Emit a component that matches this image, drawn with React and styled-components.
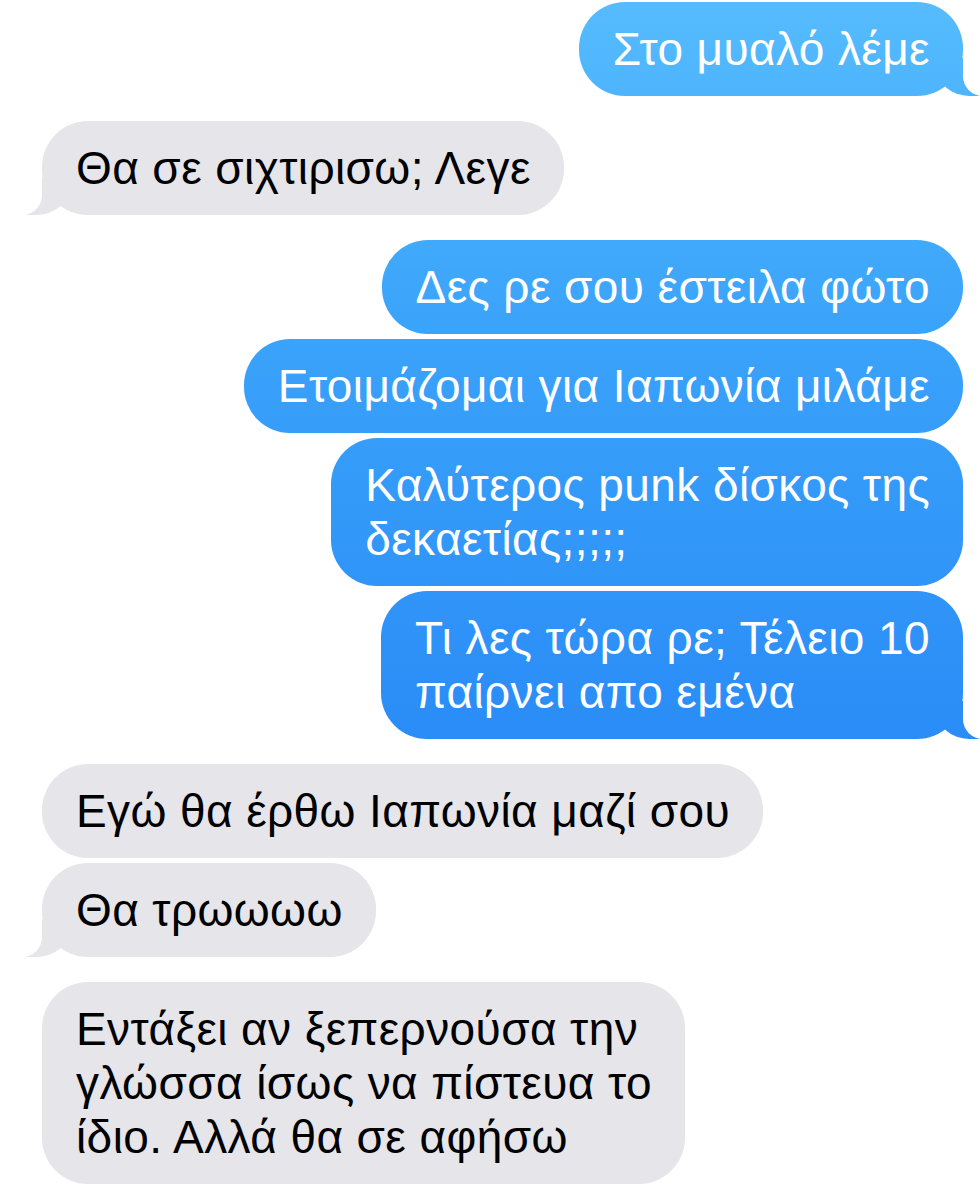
import React from 'react';
import styled, { createGlobalStyle, css } from 'styled-components';

const GlobalStyle = createGlobalStyle`
    html, body {
        margin: 0;
        padding: 0;
        background: #ffffff;
    }
    body {
        font-family: "Liberation Sans", Arial, sans-serif;
        -webkit-font-smoothing: antialiased;
    }
`

const sentGradient = css`
    background-image: linear-gradient(180deg, #56bcfe 0px, #3aa3fa 330px, #2a8cf7 740px, #1f80f5 1185px);
    background-attachment: fixed;
`

const Thread = styled.div `
    box-sizing: border-box;
    display: flex;
    flex-direction: column;
    padding: 2px 17px 0 42px;
    width: 980px;
    height: 1185px;
    overflow: hidden;
`

const Bubble = styled.div `
    position: relative;
    box-sizing: border-box;
    align-self: ${({$me}) => $me ? 'flex-end' : 'flex-start'};
    margin-top: ${({$first}) => $first ? '25px' : '5px'};
    padding: 20px 33px 20px 34px;
    border-radius: 46px;
    font-size: 46px;
    letter-spacing: 0.4px;
    line-height: 54px;
    white-space: nowrap;
    color: ${({$me}) => $me ? '#ffffff' : '#000000'};
    background-color: #e5e5ea;
    ${({$me}) => $me && sentGradient}

    &:first-child {
        margin-top: 0;
    }

    ${({$tail, $me}) => $tail && ($me ? css`
        &::before {
            content: "";
            position: absolute;
            right: -16px;
            bottom: 0;
            width: 42px;
            height: 38px;
            ${sentGradient}
            border-bottom-left-radius: 32px 28px;
        }
        &::after {
            content: "";
            position: absolute;
            right: -47px;
            bottom: 0;
            width: 47px;
            height: 40px;
            background: #ffffff;
            border-bottom-left-radius: 20px;
        }
    ` : css`
        &::before {
            content: "";
            position: absolute;
            left: -15px;
            bottom: 0;
            width: 42px;
            height: 38px;
            background: #e5e5ea;
            border-bottom-right-radius: 32px 28px;
        }
        &::after {
            content: "";
            position: absolute;
            left: -47px;
            bottom: 0;
            width: 47px;
            height: 40px;
            background: #ffffff;
            border-bottom-right-radius: 20px;
        }
    `)}
`

const Line = styled.span `
    display: block;
    position: relative;
    z-index: 1;
`

const messages = [
    { me: true, first: true, tail: true, lines: ['Στο μυαλό λέμε'] },
    { me: false, first: true, tail: true, lines: ['Θα σε σιχτιρισω; Λεγε'] },
    { me: true, first: true, lines: ['Δες ρε σου έστειλα φώτο'] },
    { me: true, lines: ['Ετοιμάζομαι για Ιαπωνία μιλάμε'] },
    { me: true, lines: ['Καλύτερος punk δίσκος της', 'δεκαετίας;;;;;'] },
    { me: true, tail: true, lines: ['Τι λες τώρα ρε; Τέλειο 10', 'παίρνει απο εμένα'] },
    { me: false, first: true, lines: ['Εγώ θα έρθω Ιαπωνία μαζί σου'] },
    { me: false, tail: true, lines: ['Θα τρωωωω'] },
    { me: false, first: true, lines: ['Εντάξει αν ξεπερνούσα την', 'γλώσσα ίσως να πίστευα το', 'ίδιο. Αλλά θα σε αφήσω'] },
]

const App = () => {
    return (
        <>
            <GlobalStyle/>
            <Thread>
                {messages.map((m, i) => (
                    <Bubble key={i} $me={m.me} $first={m.first} $tail={m.tail}>
                        {m.lines.map((l, j) => <Line key={j}>{l}</Line>)}
                    </Bubble>
                ))}
            </Thread>
        </>
    )
}

export default App;
